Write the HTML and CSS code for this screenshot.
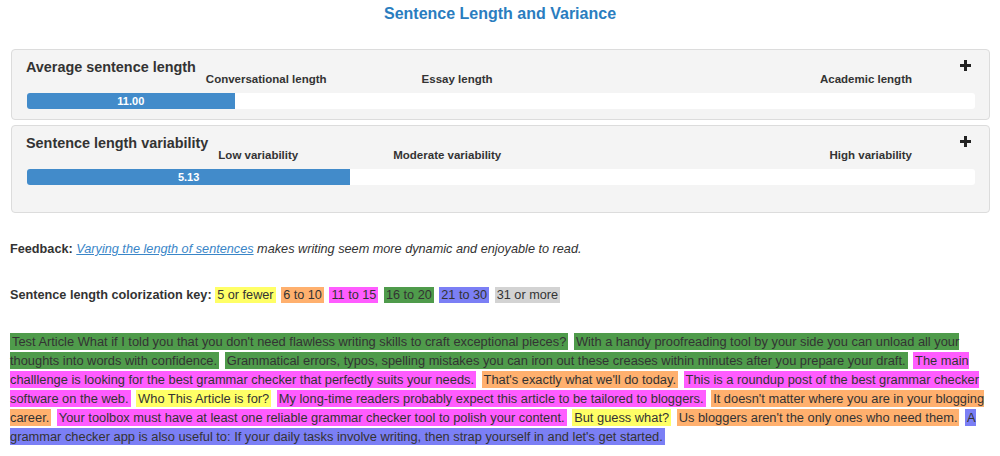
FILE: index.html
```html
<!DOCTYPE html>
<html>
<head>
<meta charset="utf-8">
<link rel="stylesheet" href="styles.css">
</head>
<body>
<h1 class="title">Sentence Length and Variance</h1>

<div class="panel">
  <div class="panel-head">
    <h4 class="panel-title">Average sentence length</h4>
    <span class="lbl lbl-first">Conversational length</span>
    <span class="lbl lbl-second">Essay length</span>
    <span class="lbl lbl-last">Academic length</span>
    <svg class="plus" width="11" height="11" viewBox="0 0 11 11"><rect x="4" y="0" width="3" height="11" fill="#222"/><rect x="0" y="4" width="11" height="3" fill="#222"/></svg>
  </div>
  <div class="bar"><div class="fill" style="width:21.9%">11.00</div></div>
</div>

<div class="panel panel-tall">
  <div class="panel-head">
    <h4 class="panel-title">Sentence length variability</h4>
    <span class="lbl lbl-first">Low variability</span>
    <span class="lbl lbl-second">Moderate variability</span>
    <span class="lbl lbl-last">High variability</span>
    <svg class="plus" width="11" height="11" viewBox="0 0 11 11"><rect x="4" y="0" width="3" height="11" fill="#222"/><rect x="0" y="4" width="11" height="3" fill="#222"/></svg>
  </div>
  <div class="bar"><div class="fill" style="width:34.1%">5.13</div></div>
</div>

<p class="feedback"><b>Feedback:</b> <i><a href="#">Varying the length of sentences</a> makes writing seem more dynamic and enjoyable to read.</i></p>

<p class="key"><b>Sentence length colorization key:</b> <span class="s c1">5 or fewer</span> <span class="s c2">6 to 10</span> <span class="s c3">11 to 15</span> <span class="s c4">16 to 20</span> <span class="s c5">21 to 30</span> <span class="s c6">31 or more</span></p>

<p class="text"><span class="s c4">Test Article What if I told you that you don't need flawless writing skills to craft exceptional pieces?</span> <span class="s c4">With a handy proofreading tool by your side you can unload all your thoughts into words with confidence.</span> <span class="s c4">Grammatical errors, typos, spelling mistakes you can iron out these creases within minutes after you prepare your draft.</span> <span class="s c3">The main challlenge is looking for the best grammar checker that perfectly suits your needs.</span> <span class="s c2">That's exactly what we'll do today.</span> <span class="s c3">This is a roundup post of the best grammar checker software on the web.</span> <span class="s c1">Who This Article is for?</span> <span class="s c3">My long-time readers probably expect this article to be tailored to bloggers.</span> <span class="s c2">It doesn't matter where you are in your blogging career.</span> <span class="s c3">Your toolbox must have at least one reliable grammar checker tool to polish your content.</span> <span class="s c1">But guess what?</span> <span class="s c2">Us bloggers aren't the only ones who need them.</span> <span class="s c5">A grammar checker app is also useful to: If your daily tasks involve writing, then strap yourself in and let's get started.</span></p>
</body>
</html>
```
FILE: styles.css
```css
html, body {
  margin: 0;
  padding: 0;
  background: #fff;
}
body {
  font-family: "Liberation Sans", Arial, sans-serif;
  color: #333;
  font-size: 12.7px;
  padding: 0 10px;
}
.title {
  margin: 0;
  padding-top: 5px;
  height: 44px;
  text-align: center;
  color: #2a7dbf;
  font-size: 16px;
  font-weight: bold;
}
.panel {
  margin: 0 0 5px 1px;
  border: 1px solid #dcdcdc;
  border-radius: 4px;
  background: #f4f4f4;
  padding: 9px 14px 10px 14px;
}
.panel-tall {
  padding-bottom: 27px;
}
.panel-head {
  display: flex;
  align-items: flex-end;
  height: 34px;
}
.panel-title {
  margin: 0;
  font-size: 14.4px;
  line-height: 17px;
  font-weight: bold;
  align-self: flex-start;
}
.lbl {
  font-size: 11.5px;
  line-height: 13px;
  font-weight: bold;
  margin-bottom: 7px;
}
.lbl-first { margin-left: 10px; }
.lbl-second { margin-left: 95px; }
.lbl-last { margin-left: auto; }
.plus {
  display: block;
  align-self: flex-start;
  margin-top: 1px;
  margin-left: 48px;
  margin-right: 4px;
}
.bar {
  background: #fff;
  border-radius: 3px;
  height: 16px;
  margin-left: 1px;
  overflow: hidden;
}
.fill {
  height: 100%;
  background: #428bca;
  color: #fff;
  font-size: 11px;
  font-weight: bold;
  line-height: 16px;
  text-align: center;
}
.feedback {
  margin: 28px 0 0 0;
  line-height: 16px;
}
.feedback a {
  color: #3a86c8;
}
.key {
  margin: 30px 0 0 0;
  line-height: 16px;
}
.text {
  margin: 29px 0 0 0;
  line-height: 19px;
  font-size: 12.85px;
}
.s {
  padding: 1px 2px;
  margin-right: 2px;
}
.c1 { background: #ffff66; }
.c2 { background: #ffb06e; }
.c3 { background: #ff5cff; }
.c4 { background: #4f9b4b; }
.c5 { background: #7b7ff5; }
.c6 { background: #d3d3d3; }
```
